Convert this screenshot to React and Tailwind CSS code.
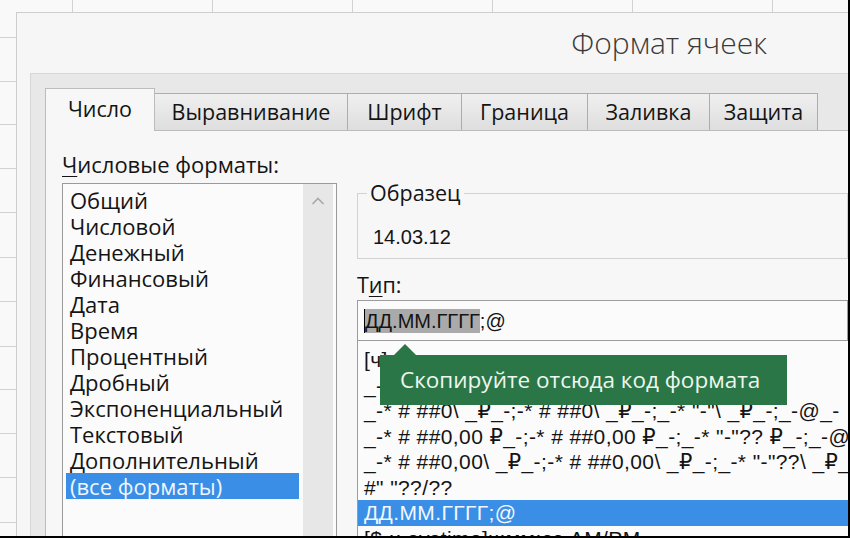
export default function App() {
  const formats = [
    "Общий",
    "Числовой",
    "Денежный",
    "Финансовый",
    "Дата",
    "Время",
    "Процентный",
    "Дробный",
    "Экспоненциальный",
    "Текстовый",
    "Дополнительный",
    "(все форматы)",
  ];
  const types = [
    "[ч]:мм:сс",
    '_-* # ##0_-;-* # ##0_-;_-* "-"_-;_-@_-',
    '_-* # ##0\\ _₽_-;-* # ##0\\ _₽_-;_-* "-"\\ _₽_-;_-@_-',
    '_-* # ##0,00 ₽_-;-* # ##0,00 ₽_-;_-* "-"?? ₽_-;_-@_-',
    '_-* # ##0,00\\ _₽_-;-* # ##0,00\\ _₽_-;_-* "-"??\\ _₽_-;_-@_-',
    '#" "??/??',
    "ДД.ММ.ГГГГ;@",
    "[$-x-systime]ч:мм:сс AM/PM",
  ];
  const tabs = [
    { t: "Выравнивание", w: "w-[193px]" },
    { t: "Шрифт", w: "w-[114px]" },
    { t: "Граница", w: "w-[126px]" },
    { t: "Заливка", w: "w-[122px]" },
    { t: "Защита", w: "w-[108px]" },
  ];
  const hLines = [37, 81, 124, 168, 212, 257, 301, 346, 389, 433, 477, 522];
  const vLines = [72, 212, 352, 492, 632, 772];
  return (
    <div className="relative w-[850px] h-[538px] overflow-hidden bg-[#f9f9f9] border-r-2 border-b-2 border-black font-['Open_Sans','Noto_Sans',sans-serif] text-[#141414]">
      <svg className="absolute inset-0" width="850" height="538">
        {hLines.map((y) => (
          <line key={"h" + y} x1="0" x2="850" y1={y + 0.5} y2={y + 0.5} stroke="#d2d2d2" strokeWidth="1" />
        ))}
        {vLines.map((x) => (
          <line key={"v" + x} x1={x + 0.5} x2={x + 0.5} y1="0" y2="538" stroke="#d2d2d2" strokeWidth="1" />
        ))}
      </svg>

      <div className="relative ml-[16px] mt-[12px] h-[524px] flex flex-col bg-[#f6f6f6] border-l border-t border-[#cdcdcd]">
        <div className="h-[60px] shrink-0 flex items-center justify-end pr-[81px] text-[30px] leading-[36px] text-[#3a3a3a] font-light">
          Формат ячеек
        </div>

        <div className="flex-1 min-h-0 flex flex-col ml-[13px] bg-[#e8e8e8] border-l border-t border-[#d6d6d6] pl-[14px] pt-[14px]">
          <div className="h-[42px] shrink-0 flex items-end text-[21.5px] leading-[28px]">
            <div className="relative z-10 w-[110px] h-[43px] -mb-px flex items-center justify-center bg-[#f7f7f7] border-l border-t border-r border-[#bcbcbc]">
              <span className="-mt-[2px]">Число</span>
            </div>
            {tabs.map((tab) => (
              <div
                key={tab.t}
                className={`${tab.w} h-[37px] flex items-center justify-center bg-gradient-to-b from-[#f0f0f0] to-[#dedede] border-t border-r border-[#adadad]`}
              >
                {tab.t}
              </div>
            ))}
          </div>

          <div className="flex-1 min-h-0 flex bg-[#f7f7f7] border-l border-t border-[#bcbcbc] pl-[16px] pt-[20px]">
            <div className="w-[275px] shrink-0 flex flex-col">
              <div className="h-[26px] leading-[26px] text-[22px] mb-[6px] whitespace-nowrap">
                <span className="underline underline-offset-[3px] decoration-1">Ч</span>исловые форматы:
              </div>
              <div className="flex-1 min-h-0 flex bg-[#fbfbfb] border-l border-t border-r border-[#9a9a9a]">
                <div className="flex-1 pt-[3px] pl-[3px] pr-[4px]">
                  {formats.map((f, i) => (
                    <div
                      key={f}
                      className={
                        i === formats.length - 1
                          ? "h-[26px] leading-[26px] text-[22px] pl-[4px] whitespace-nowrap bg-[#3a8ee6] text-[#eef6ff]"
                          : "h-[26px] leading-[26px] text-[22px] pl-[4px] whitespace-nowrap"
                      }
                    >
                      {f}
                    </div>
                  ))}
                </div>
                <div className="w-[30px] mr-[3px] bg-[#e7e7e7] flex justify-center pt-[12px]">
                  <svg width="14" height="10" viewBox="0 0 14 10">
                    <polyline points="1.5,8 7,2.5 12.5,8" fill="none" stroke="#a8a8a8" strokeWidth="1.6" />
                  </svg>
                </div>
              </div>
            </div>

            <div className="relative flex-1 min-w-0 ml-[20px] mt-[31px] flex flex-col">
              <fieldset className="m-0 h-[77px] min-w-0 border border-[#d2d2d2] pl-[9px] pr-0 pb-0 pt-0">
                <legend className="px-[3px] text-[21.5px] leading-[22px]">Образец</legend>
                <div className="ml-[6px] mt-[22px] text-[20px] leading-[22px] font-['Liberation_Sans','DejaVu_Sans',sans-serif]">
                  14.03.12
                </div>
              </fieldset>

              <div className="mt-[15px] h-[22px] leading-[22px] text-[21.5px]">
                Т<span className="underline underline-offset-[3px] decoration-1">и</span>п:
              </div>

              <div className="mt-[4px] h-[41px] shrink-0 flex items-center border border-[#9c9c9c] bg-[#fbfbfb] pl-[6px] text-[20px] font-['Liberation_Sans','DejaVu_Sans',sans-serif] whitespace-pre">
                <span className="bg-[#aaaaaa] border-l border-black leading-[24px]">ДД.ММ.ГГГГ</span>
                <span className="leading-[24px]">;@</span>
              </div>

              <div className="flex-1 min-h-0 overflow-hidden bg-[#fbfbfb] border-l border-[#9c9c9c] pt-[6px] text-[21px] tracking-[0.4px] font-['Liberation_Sans','DejaVu_Sans',sans-serif]">
                {types.map((t, i) => (
                  <div
                    key={t}
                    className={
                      i === 6
                        ? "h-[25.5px] leading-[25.5px] whitespace-pre pl-[6px] bg-[#3a8ee6] text-[#f2f8ff]"
                        : "h-[25.5px] leading-[25.5px] whitespace-pre pl-[6px]"
                    }
                  >
                    {t}
                  </div>
                ))}
              </div>

              <div className="absolute left-[23px] top-[173px] w-[407px] h-[50px] bg-[#2a7646] flex items-center pl-[20px] text-[22.5px] text-[#eef6ef] whitespace-nowrap">
                <svg className="absolute left-[13px] -top-[11px]" width="24" height="12" viewBox="0 0 24 12">
                  <polygon points="0,12 12,0 24,12" fill="#2a7646" />
                </svg>
                Скопируйте отсюда код формата
              </div>
            </div>
          </div>
        </div>
      </div>
    </div>
  );
}
